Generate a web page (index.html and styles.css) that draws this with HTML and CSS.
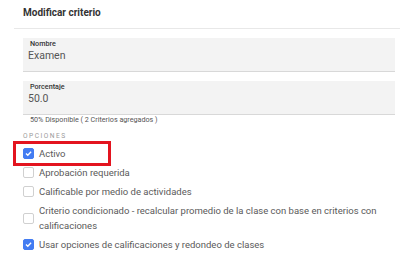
FILE: index.html
```html
<!DOCTYPE html>
<html lang="es">
<head>
    <meta charset="UTF-8">
    <title>Modificar criterio</title>
    <link rel="stylesheet" href="styles.css">
</head>
<body>
    <div class="title">Modificar criterio</div>
    <div class="hl"></div>

    <div class="form">
        <div class="field">
            <div class="field_label">Nombre</div>
            <div class="field_value">Examen</div>
        </div>
        <div class="field">
            <div class="field_label">Porcentaje</div>
            <div class="field_value">50.0</div>
        </div>
        <div class="hint">50% Disponible ( 2 Criterios agregados )</div>

        <div class="section">OPCIONES</div>
        <div class="options">
            <div class="option highlight">
                <span class="box checked"><svg viewBox="0 0 10 10"><path d="M2.2 5.1 L4.2 7 L7.9 3" /></svg></span>
                <span>Activo</span>
            </div>
            <div class="option">
                <span class="box"></span>
                <span>Aprobación requerida</span>
            </div>
            <div class="option">
                <span class="box"></span>
                <span>Calificable por medio de actividades</span>
            </div>
            <div class="option">
                <span class="box"></span>
                <span>Criterio condicionado - recalcular promedio de la clase con base en criterios con calificaciones</span>
            </div>
            <div class="option">
                <span class="box checked"><svg viewBox="0 0 10 10"><path d="M2.2 5.1 L4.2 7 L7.9 3" /></svg></span>
                <span>Usar opciones de calificaciones y redondeo de clases</span>
            </div>
        </div>
    </div>
</body>
</html>
```

FILE: styles.css
```css
body {
    margin: 0;
    font-family: Roboto, "Liberation Sans", sans-serif;
    background: #ffffff;
    color: #5a5a5a;
}

/*  HEADER  */
.title {
    padding: 7px 0 0 23px;
    height: 21px;
    font-size: 10px;
    line-height: 12px;
    font-weight: bold;
    color: #333333;
}
.hl {
    margin-left: 14px;
    border-top: 1px solid #e8e8e8;
}

/*  FORM  */
.form {
    padding: 9px 5px 0 23px;
}
.field {
    background-color: #f3f3f3;
    border-bottom: 1px solid #d8d8d8;
    height: 34px;
    padding: 1px 7px 0 7px;
    margin-bottom: 9px;
    box-sizing: border-box;
}
.field_label {
    font-size: 7.2px;
    font-weight: 500;
    color: #333333;
    line-height: 9px;
}
.field_value {
    margin-left: -2px;
    font-size: 10.5px;
    color: #555555;
    line-height: 15px;
}
.hint {
    margin-top: -9px;
    padding-left: 7px;
    font-size: 7.2px;
    color: #555555;
    line-height: 9px;
}
.section {
    margin-top: 8px;
    font-size: 6.6px;
    letter-spacing: 1.5px;
    color: #9a9a9a;
    line-height: 9px;
}

/*  OPTIONS  */
.options {
    margin-top: 3px;
}
.option {
    display: flex;
    align-items: center;
    gap: 5px;
    font-size: 9.5px;
    line-height: 15px;
    padding: 2px 0;
}
.option.highlight {
    position: relative;
}
.option.highlight::after {
    content: "";
    position: absolute;
    left: -10px;
    top: -3px;
    width: 98px;
    height: 25px;
    box-sizing: border-box;
    border: 3px solid #e3141f;
}
.box {
    flex: none;
    width: 9px;
    height: 9px;
    border: 1px solid #d0d0d0;
    border-radius: 2px;
    background: #ffffff;
}
.box.checked {
    background: #437cf2;
    border-color: #437cf2;
}
.box svg {
    display: block;
    width: 9px;
    height: 9px;
}
.box path {
    fill: none;
    stroke: #ffffff;
    stroke-width: 1.5;
}
```
